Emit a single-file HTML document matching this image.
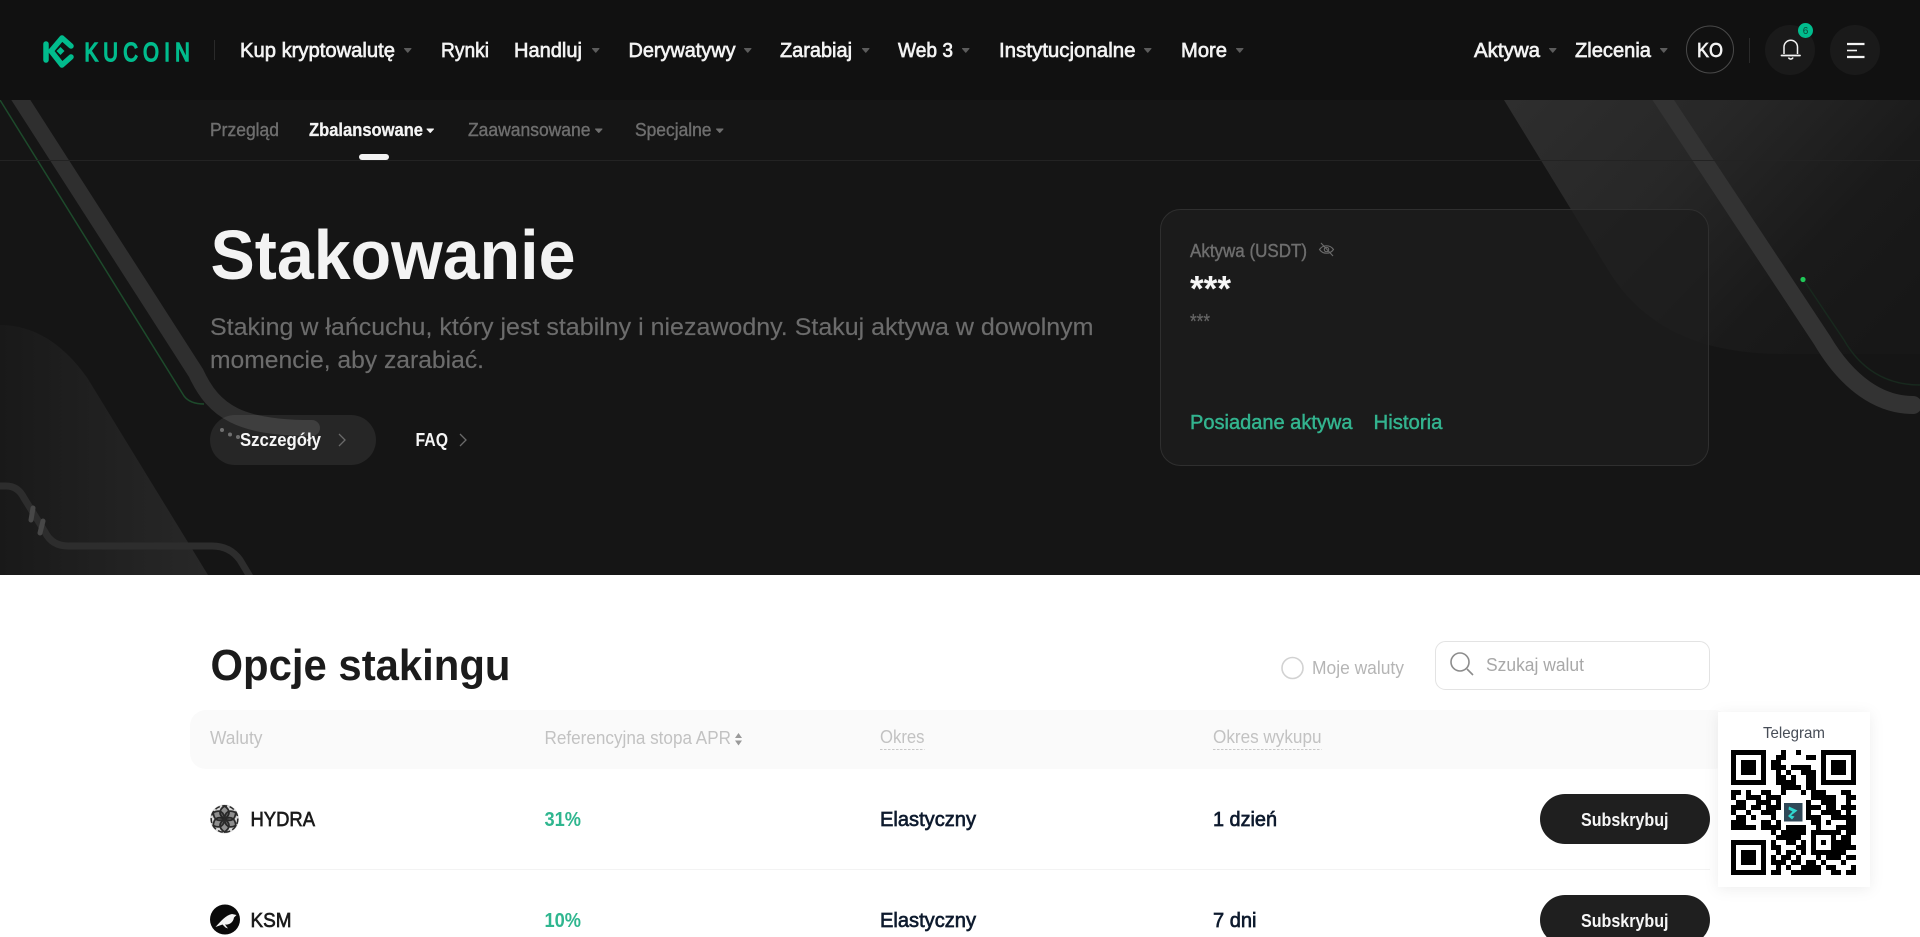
<!DOCTYPE html>
<html lang="pl">
<head>
<meta charset="utf-8">
<title>Stakowanie</title>
<style>
html,body{margin:0;padding:0;background:#fff;width:1920px;height:937px;overflow:hidden}
svg{display:block}
text{font-family:"Liberation Sans",sans-serif;white-space:pre}
.nav{font-size:20px;fill:#f3f3f3;stroke:#f3f3f3;stroke-width:.65}
.sub{font-size:18px;fill:#6e6e6e;stroke:#6e6e6e;stroke-width:.4}
.b18{font-size:18px;font-weight:bold;fill:#f6f6f6}
.desc{font-size:24px;fill:#6c6c6c;stroke:#6c6c6c;stroke-width:.15}
.green{font-size:20px;fill:#33b48f;stroke:#33b48f;stroke-width:.45}
.th{font-size:18px;fill:#c2c2c2}
.cell{font-size:20px;fill:#1b1b1b;stroke:#1b1b1b;stroke-width:.65}
.dark{font-size:20px;fill:#0e1b2e;stroke:#0e1b2e;stroke-width:.65}
.pct{font-size:20px;font-weight:bold;fill:#2fb68f}
.car{fill:#5c5c5c;stroke:#5c5c5c;stroke-width:1;stroke-linejoin:round}
</style>
</head>
<body>
<svg xmlns="http://www.w3.org/2000/svg" width="1920" height="937" viewBox="0 0 1920 937">
<defs>
<linearGradient id="gr" gradientUnits="userSpaceOnUse" x1="1504" y1="100" x2="1820" y2="400"><stop offset="0" stop-color="#2e2e2e"/><stop offset=".4" stop-color="#272727"/><stop offset=".75" stop-color="#1a1a1a"/><stop offset="1" stop-color="#171717"/></linearGradient>
<linearGradient id="gl" gradientUnits="userSpaceOnUse" x1="0" y1="0" x2="208" y2="0"><stop offset="0" stop-color="#191919"/><stop offset="1" stop-color="#282828"/></linearGradient>
<filter id="sh" x="-20%" y="-20%" width="140%" height="140%"><feDropShadow dx="0" dy="2" stdDeviation="7" flood-color="#000" flood-opacity=".07"/></filter>
</defs>

<!-- hero -->
<rect y="100" width="1920" height="475" fill="#151515"/>
<path d="M1504 100L1610 273C1640 320 1690 354 1783 354H1920V100Z" fill="url(#gr)"/>
<path d="M0 325C30 325 61 340 88 379L208 575H0Z" fill="url(#gl)"/>
<path d="M1650 80L1822 340C1848 384 1880 405 1913 405" fill="none" stroke="#333" stroke-width="18" stroke-linecap="round"/>
<path d="M1803 279L1844 340C1860 368 1885 385 1920 385" fill="none" stroke="#18291e" stroke-width="1.5"/>
<circle cx="1803" cy="279.500" r="2.600" fill="#1fc757"/>
<path d="M8 80L196 373C214 412 240 428 312 428" fill="none" stroke="#2f2f2f" stroke-width="16" stroke-linecap="round"/>
<path d="M0 100L184 396Q190 404 204 404" fill="none" stroke="#1d4a2b" stroke-width="1.500"/>
<path d="M0 486H6Q18 486 24 498L45 532Q52 546 68 546H212Q230 546 240 560L252 580" fill="none" stroke="#2d2d2d" stroke-width="7"/>
<path d="M33 508L31 520M43 521L40 533" stroke="#474747" stroke-width="5" stroke-linecap="round"/>
<rect y="160" width="1920" height="1" fill="#232323"/>

<!-- header -->
<rect width="1920" height="100" fill="#111"/>

<!-- logo -->
<g fill="none" stroke="#01bc8d" stroke-width="5.500" stroke-linecap="round" stroke-linejoin="round">
<path d="M46 44V60"/>
<path d="M51 51L62 38L71 46"/>
<path d="M51 51L62 65L71 57"/>
</g>
<path d="M60.500 47L64.500 51L60.500 55L56.500 51Z" fill="#01bc8d"/>
<text transform="translate(84.500 61) scale(.78 1)" x="0" y="0" font-size="26" fill="#01bc8d" stroke="#01bc8d" stroke-width="1.600" textLength="135" lengthAdjust="spacing">KUCOIN</text>
<rect x="214" y="40" width="1" height="20" fill="#2a2a2a"/>

<!-- nav -->
<text class="nav" x="240" y="57" textLength="155" lengthAdjust="spacingAndGlyphs">Kup kryptowalutę</text>
<path class="car" d="M404.500 48.500h6.500l-3.250 3.800z"/>
<text class="nav" x="441" y="57" textLength="48" lengthAdjust="spacingAndGlyphs">Rynki</text>
<text class="nav" x="514" y="57" textLength="68" lengthAdjust="spacingAndGlyphs">Handluj</text>
<path class="car" d="M592.500 48.500h6.500l-3.250 3.800z"/>
<text class="nav" x="628.500" y="57" textLength="107" lengthAdjust="spacingAndGlyphs">Derywatywy</text>
<path class="car" d="M744.500 48.500h6.500l-3.250 3.800z"/>
<text class="nav" x="780" y="57" textLength="72" lengthAdjust="spacingAndGlyphs">Zarabiaj</text>
<path class="car" d="M862.500 48.500h6.500l-3.250 3.800z"/>
<text class="nav" x="898" y="57" textLength="55" lengthAdjust="spacingAndGlyphs">Web 3</text>
<path class="car" d="M962.500 48.500h6.500l-3.250 3.800z"/>
<text class="nav" x="999" y="57" textLength="136.500" lengthAdjust="spacingAndGlyphs">Instytucjonalne</text>
<path class="car" d="M1144.500 48.500h6.500l-3.250 3.800z"/>
<text class="nav" x="1181" y="57" textLength="46" lengthAdjust="spacingAndGlyphs">More</text>
<path class="car" d="M1236.500 48.500h6.500l-3.250 3.800z"/>

<text class="nav" x="1474" y="57" textLength="66" lengthAdjust="spacingAndGlyphs">Aktywa</text>
<path class="car" d="M1549.500 48.500h6.500l-3.250 3.800z"/>
<text class="nav" x="1575" y="57" textLength="76" lengthAdjust="spacingAndGlyphs">Zlecenia</text>
<path class="car" d="M1660.500 48.500h6.500l-3.250 3.800z"/>
<circle cx="1710" cy="49.500" r="23.500" fill="none" stroke="#4a4a4a"/>
<text class="nav" x="1697" y="57" textLength="26" lengthAdjust="spacingAndGlyphs">KO</text>
<rect x="1749" y="38" width="1" height="25" fill="#2a2a2a"/>
<circle cx="1790" cy="50" r="25" fill="#1a1a1a"/>
<path d="M1784 54V47a6.750 6.750 0 0 1 13.500 0V54" fill="none" stroke="#f3f3f3" stroke-width="1.500"/>
<path d="M1781.500 55.500h18.500" stroke="#f3f3f3" stroke-width="1.800" stroke-linecap="round"/>
<path d="M1788.500 57.500a2.400 2.400 0 0 0 4.500 0" fill="none" stroke="#f3f3f3" stroke-width="1.500"/>
<circle cx="1805.500" cy="30.500" r="7.500" fill="#01bc8d"/>
<text x="1805.500" y="34" font-size="10" fill="#0c4636" text-anchor="middle">6</text>
<circle cx="1855" cy="50" r="25" fill="#1a1a1a"/>
<path d="M1847 44H1864.500M1847 57H1864.500" stroke="#f3f3f3" stroke-width="2.200"/>
<path d="M1847 50.500H1857" stroke="#f3f3f3" stroke-width="1.600"/>

<!-- sub nav -->
<text class="sub" x="210" y="136" textLength="69" lengthAdjust="spacingAndGlyphs">Przegląd</text>
<text x="309" y="136" font-size="18" font-weight="bold" fill="#f3f3f3" stroke="#f3f3f3" stroke-width=".3" textLength="114" lengthAdjust="spacingAndGlyphs">Zbalansowane</text>
<path d="M427 129h6.500l-3.250 3.500z" fill="#f3f3f3" stroke="#f3f3f3" stroke-linejoin="round"/>
<rect x="359" y="154" width="30" height="6" rx="3" fill="#f3f3f3"/>
<text class="sub" x="468" y="136" textLength="122.500" lengthAdjust="spacingAndGlyphs">Zaawansowane</text>
<path class="car" d="M595.500 129h6.500l-3.250 3.500z" style="fill:#6e6e6e;stroke:#6e6e6e"/>
<text class="sub" x="635" y="136" textLength="76.500" lengthAdjust="spacingAndGlyphs">Specjalne</text>
<path class="car" d="M716.500 129h6.500l-3.250 3.500z" style="fill:#6e6e6e;stroke:#6e6e6e"/>

<!-- hero text -->
<text x="210.500" y="279" font-size="70" font-weight="bold" fill="#f3f3f3" textLength="365" lengthAdjust="spacingAndGlyphs">Stakowanie</text>
<text class="desc" x="210" y="335" textLength="883.500" lengthAdjust="spacingAndGlyphs">Staking w łańcuchu, który jest stabilny i niezawodny. Stakuj aktywa w dowolnym</text>
<text class="desc" x="210" y="368" textLength="274" lengthAdjust="spacingAndGlyphs">momencie, aby zarabiać.</text>

<rect x="210" y="415" width="166" height="50" rx="25" fill="#fff" fill-opacity=".075"/>
<circle cx="222" cy="430" r="2" fill="#6f6f6f"/><circle cx="230" cy="434.500" r="2" fill="#6f6f6f"/><circle cx="238" cy="437" r="2" fill="#6f6f6f"/>
<text class="b18" x="240" y="446" textLength="81" lengthAdjust="spacingAndGlyphs">Szczegóły</text>
<path d="M339 434L345 440L339 446" fill="none" stroke="#6a6a6a" stroke-width="1.300"/>
<text class="b18" x="415.500" y="446" textLength="32.500" lengthAdjust="spacingAndGlyphs">FAQ</text>
<path d="M460 434L466 440L460 446" fill="none" stroke="#6a6a6a" stroke-width="1.300"/>

<!-- assets card -->
<rect x="1160.500" y="209.500" width="548" height="256" rx="20" fill="#1d1d1d" fill-opacity=".75" stroke="#2f2f2f"/>
<text class="sub" x="1190" y="257" textLength="117" lengthAdjust="spacingAndGlyphs">Aktywa (USDT)</text>
<g fill="none" stroke="#6a6a6a" stroke-width="1.100">
<path d="M1319.500 249.500C1323 244.500 1330 244.500 1333.500 249.500C1330 254.500 1323 254.500 1319.500 249.500Z"/>
<circle cx="1326.500" cy="249.500" r="2.200"/>
<path d="M1321 243L1333 256"/>
</g>
<text x="1190" y="301" font-size="36" font-weight="bold" fill="#f6f6f6" textLength="41" lengthAdjust="spacingAndGlyphs">***</text>
<text x="1190" y="328" font-size="20" fill="#646464" stroke="#646464" stroke-width=".3" textLength="20" lengthAdjust="spacingAndGlyphs">***</text>
<text class="green" x="1190" y="429" textLength="162.500" lengthAdjust="spacingAndGlyphs">Posiadane aktywa</text>
<text class="green" x="1373.500" y="429" textLength="69" lengthAdjust="spacingAndGlyphs">Historia</text>

<!-- white section -->
<rect y="575" width="1920" height="362" fill="#fff"/>
<text x="210.500" y="680" font-size="44" font-weight="bold" fill="#1b1b1b" textLength="300" lengthAdjust="spacingAndGlyphs">Opcje stakingu</text>

<circle cx="1292.500" cy="668" r="10.500" fill="none" stroke="#d2d2d2" stroke-width="1.600"/>
<text x="1312" y="674" font-size="18" fill="#b5b5b5" textLength="92" lengthAdjust="spacingAndGlyphs">Moje waluty</text>
<rect x="1435.500" y="641.500" width="274" height="48" rx="10" fill="#fff" stroke="#e3e3e3"/>
<circle cx="1460" cy="662" r="9" fill="none" stroke="#8c8c8c" stroke-width="1.600"/>
<path d="M1467 669L1473 675" stroke="#8c8c8c" stroke-width="1.600"/>
<text x="1486" y="671" font-size="18" fill="#a8a8a8" textLength="98" lengthAdjust="spacingAndGlyphs">Szukaj walut</text>

<rect x="190" y="710" width="1540" height="59" rx="16" fill="#fafafa"/>
<text class="th" x="210" y="744" textLength="52.500" lengthAdjust="spacingAndGlyphs">Waluty</text>
<text class="th" x="544.500" y="744" textLength="186.500" lengthAdjust="spacingAndGlyphs">Referencyjna stopa APR</text>
<path d="M735 738L738.500 733L742 738ZM735 740.500L738.500 745.500L742 740.500Z" fill="#9a9a9a"/>
<text class="th" x="880" y="743" textLength="44.500" lengthAdjust="spacingAndGlyphs">Okres</text>
<path d="M880 749.500H924.500" stroke="#c9c9c9" stroke-dasharray="2.500 1.500"/>
<text class="th" x="1213" y="743" textLength="108.500" lengthAdjust="spacingAndGlyphs">Okres wykupu</text>
<path d="M1213 749.500H1321.500" stroke="#c9c9c9" stroke-dasharray="2.500 1.500"/>

<!-- row 1 -->
<g transform="translate(224.500 819)">
<circle r="14.500" fill="#d8d8d8"/>
<g fill="#222" fill-opacity=".4" stroke="#2a2a2a" stroke-width="1.800">
<circle r="13.300" stroke-dasharray="5 2.500" stroke-width="1.500" fill="none"/>
<path d="M0 0C-6 -4 -6 -9 0 -13C6 -9 6 -4 0 0Z"/>
<path d="M0 0C-6 -4 -6 -9 0 -13C6 -9 6 -4 0 0Z" transform="rotate(60)"/>
<path d="M0 0C-6 -4 -6 -9 0 -13C6 -9 6 -4 0 0Z" transform="rotate(120)"/>
<path d="M0 0C-6 -4 -6 -9 0 -13C6 -9 6 -4 0 0Z" transform="rotate(180)"/>
<path d="M0 0C-6 -4 -6 -9 0 -13C6 -9 6 -4 0 0Z" transform="rotate(240)"/>
<path d="M0 0C-6 -4 -6 -9 0 -13C6 -9 6 -4 0 0Z" transform="rotate(300)"/>
</g>
</g>
<text class="cell" x="250.500" y="826" textLength="64.500" lengthAdjust="spacingAndGlyphs">HYDRA</text>
<text class="pct" x="544.500" y="826" textLength="36.500" lengthAdjust="spacingAndGlyphs">31%</text>
<text class="dark" x="880" y="826" textLength="96" lengthAdjust="spacingAndGlyphs">Elastyczny</text>
<text class="dark" x="1213" y="826" textLength="64" lengthAdjust="spacingAndGlyphs">1 dzień</text>
<rect x="1540" y="794" width="170" height="50" rx="25" fill="#1f1f1f"/>
<text class="b18" x="1581" y="826" textLength="87.500" lengthAdjust="spacingAndGlyphs">Subskrybuj</text>
<rect x="210" y="869" width="1500" height="1" fill="#f3f3f3"/>

<!-- row 2 -->
<circle cx="225" cy="919.500" r="15" fill="#0a0a0a"/>
<path d="M215.500 927C221 921 226 915 232 914L236.500 915L234 917.500C233 923 229 925 225 924.500L228 928.500L225.500 927.500L222.500 924.500Z" fill="#f4f4f4"/>
<text class="cell" x="250.500" y="927" textLength="41" lengthAdjust="spacingAndGlyphs">KSM</text>
<text class="pct" x="544.500" y="927" textLength="36.500" lengthAdjust="spacingAndGlyphs">10%</text>
<text class="dark" x="880" y="927" textLength="96" lengthAdjust="spacingAndGlyphs">Elastyczny</text>
<text class="dark" x="1213" y="927" textLength="43.500" lengthAdjust="spacingAndGlyphs">7 dni</text>
<rect x="1540" y="895" width="170" height="50" rx="25" fill="#1f1f1f"/>
<text class="b18" x="1581" y="927" textLength="87.500" lengthAdjust="spacingAndGlyphs">Subskrybuj</text>

<!-- telegram card -->
<rect x="1718" y="712" width="152" height="175" fill="#fff" filter="url(#sh)"/>
<text x="1763" y="738" font-size="16" fill="#474d57" textLength="62" lengthAdjust="spacingAndGlyphs">Telegram</text>
<svg x="1731" y="750" width="125" height="125" viewBox="0 0 25 25" shape-rendering="crispEdges">
<path fill="#000" fill-rule="evenodd" d="M0 0h7v7h-7zM1 1v5h5v-5zM2 2h3v3h-3zM18 0h7v7h-7zM19 1v5h5v-5zM20 2h3v3h-3zM0 18h7v7h-7zM1 19v5h5v-5zM2 20h3v3h-3zM16 16h5v5h-5zM17 17v3h3v-3zM18 18h1v1h-1z"/>
<path fill="#000" d="M10 0h1v1h-1zM13 0h1v1h-1zM9 1h2v1h-2zM15 1h2v1h-2zM8 2h2v1h-2zM8 3h3v1h-3zM12 3h4v1h-4zM9 4h1v1h-1zM11 4h1v1h-1zM14 4h3v1h-3zM9 5h2v1h-2zM12 5h1v1h-1zM15 5h2v1h-2zM9 6h2v1h-2zM11 6h2v1h-2zM15 6h2v1h-2zM10 7h4v1h-4zM15 7h2v1h-2zM0 8h2v1h-2zM3 8h1v1h-1zM6 8h2v1h-2zM10 8h1v1h-1zM14 8h1v1h-1zM16 8h3v1h-3zM22 8h2v1h-2zM0 9h1v1h-1zM3 9h3v1h-3zM7 9h3v1h-3zM16 9h5v1h-5zM23 9h2v1h-2zM1 10h2v1h-2zM5 10h3v1h-3zM9 10h1v1h-1zM15 10h1v1h-1zM18 10h3v1h-3zM23 10h1v1h-1zM0 11h3v1h-3zM4 11h2v1h-2zM7 11h3v1h-3zM15 11h3v1h-3zM19 11h2v1h-2zM22 11h3v1h-3zM0 12h1v1h-1zM3 12h1v1h-1zM6 12h3v1h-3zM15 12h1v1h-1zM18 12h4v1h-4zM23 12h1v1h-1zM1 13h2v1h-2zM4 13h1v1h-1zM8 13h1v1h-1zM15 13h3v1h-3zM20 13h2v1h-2zM22 13h3v1h-3zM0 14h3v1h-3zM6 14h2v1h-2zM9 14h1v1h-1zM16 14h2v1h-2zM19 14h1v1h-1zM23 14h2v1h-2zM0 15h5v1h-5zM6 15h4v1h-4zM11 15h4v1h-4zM17 15h1v1h-1zM21 15h4v1h-4zM8 16h1v1h-1zM10 16h5v1h-5zM21 16h1v1h-1zM23 16h2v1h-2zM9 17h3v1h-3zM12 17h2v1h-2zM22 17h2v1h-2zM8 18h1v1h-1zM11 18h2v1h-2zM14 18h1v1h-1zM21 18h3v1h-3zM8 19h2v1h-2zM13 19h2v1h-2zM21 19h4v1h-4zM9 20h1v1h-1zM11 20h2v1h-2zM14 20h1v1h-1zM21 20h2v1h-2zM8 21h1v1h-1zM10 21h2v1h-2zM13 21h1v1h-1zM17 21h1v1h-1zM19 21h3v1h-3zM23 21h2v1h-2zM8 22h3v1h-3zM12 22h2v1h-2zM15 22h2v1h-2zM18 22h1v1h-1zM22 22h1v1h-1zM9 23h1v1h-1zM11 23h1v1h-1zM14 23h4v1h-4zM19 23h2v1h-2zM24 23h1v1h-1zM8 24h2v1h-2zM12 24h3v1h-3zM15 24h3v1h-3zM20 24h2v1h-2zM23 24h2v1h-2z"/>
</svg>
<rect x="1784" y="803" width="18.500" height="18.500" fill="#2f4858"/>
<path d="M1789 806.500L1797.500 810.500L1791 815.500L1794.500 816.500L1792 819.500L1788 816L1792.500 811.500L1788.500 809.500Z" fill="#30d6cf"/>
</svg>
</body>
</html>
